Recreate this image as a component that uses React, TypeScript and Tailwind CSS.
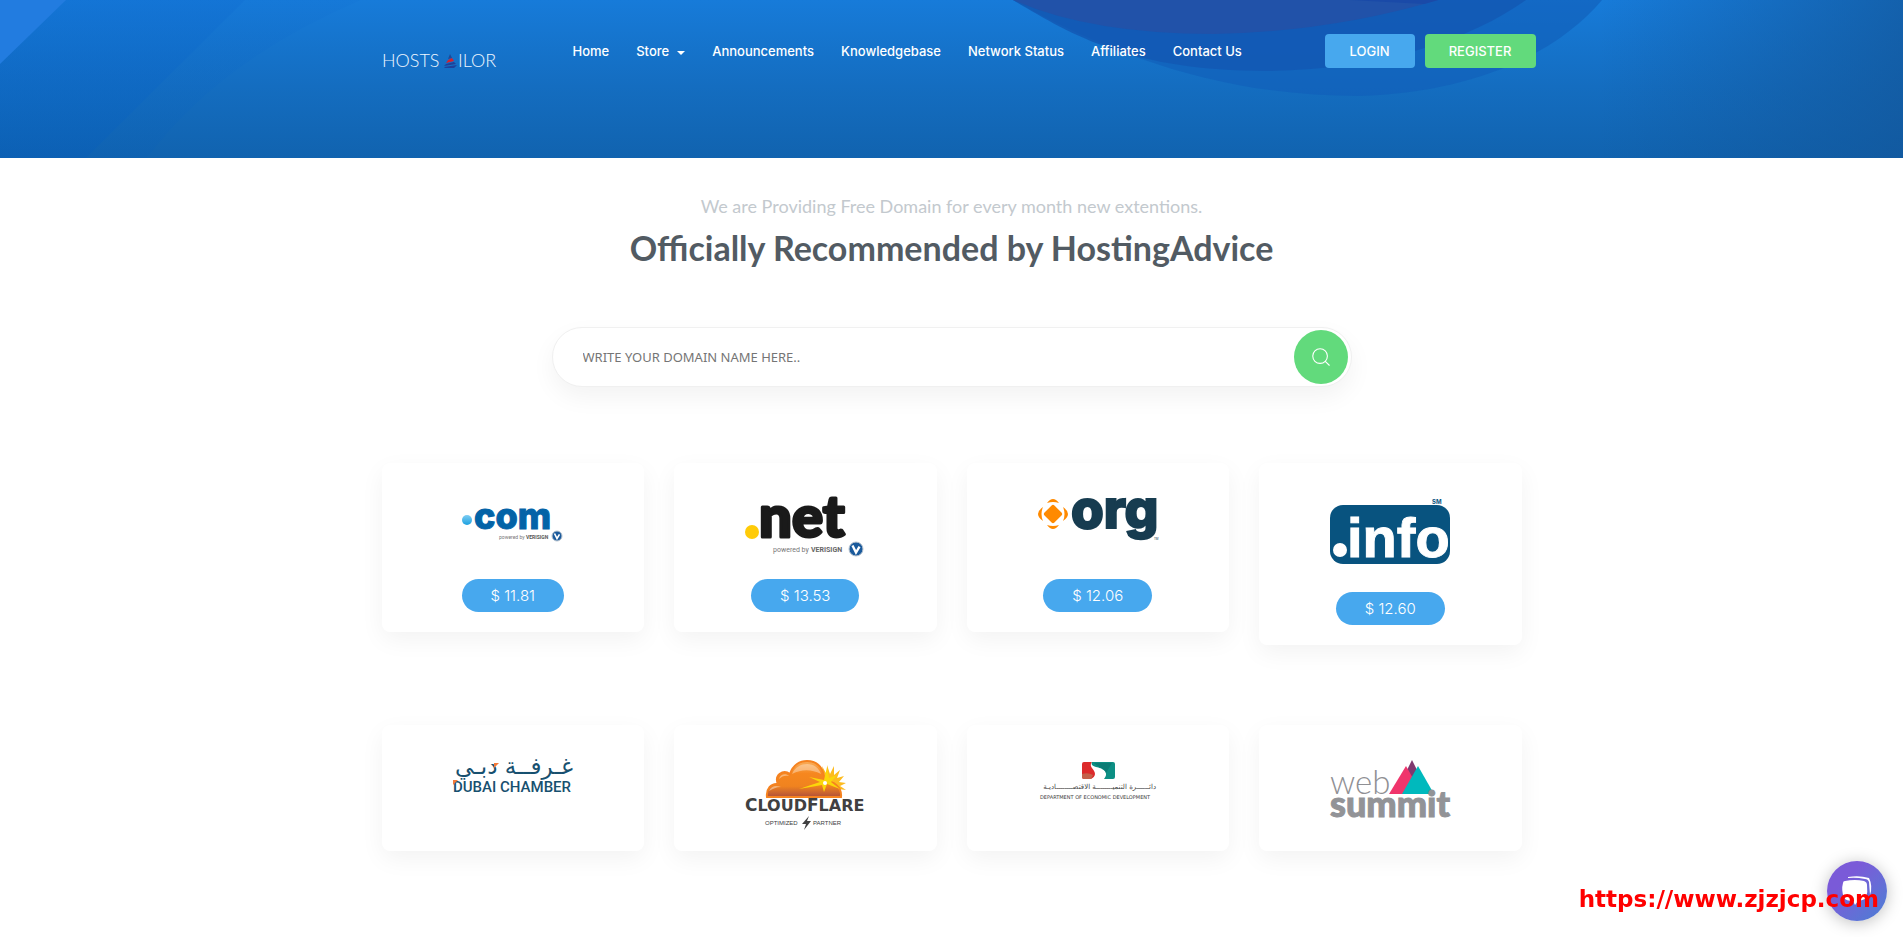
import type {ReactNode} from "react";
import {Search} from "lucide-react";

const navLinks = [
    {title: "Home", url: "#home"},
    {title: "Store", url: "#store", dropdown: true},
    {title: "Announcements", url: "#announcements"},
    {title: "Knowledgebase", url: "#knowledgebase"},
    {title: "Network Status", url: "#status"},
    {title: "Affiliates", url: "#affiliates"},
    {title: "Contact Us", url: "#contact"},
];

/*
|--------------------------------------------------------------------------
| $logos
|--------------------------------------------------------------------------
*/
function SiteLogo() {
    return (
        <svg width="117" height="14" viewBox="0 0 117 14" className="overflow-visible" role="img" aria-label="HostSailor">
            <g className="font-['Lato'] font-light" fontSize="18" fill="#eef6ff">
                <text x="-1" y="13">HOSTS</text>
                <text x="75" y="13">ILOR</text>
            </g>
            <path d="M67 0 69 4 65 5Z" fill="#1b4a9c"/>
            <path d="M69 4 71 7 63 9 65 6Z" fill="#d3232f"/>
            <path d="M71 8 73 10 61 12 63 10ZM61 13 74 11 71 14 62 14Z" fill="#20419a"/>
        </svg>
    );
}

function VerisignBadge({cx, cy, r}: { cx: number; cy: number; r: number }) {
    return (
        <g>
            <circle cx={cx} cy={cy} r={r} fill="#1a5a9c" stroke="#b9c4cf" strokeWidth="1"/>
            <path
                d={`M${cx - r / 2} ${cy - r / 2}L${cx} ${cy + r / 2}L${cx + r / 2} ${cy - r / 3}`}
                fill="none" stroke="#fff" strokeWidth={r / 3}
            />
        </g>
    );
}

function ComLogo() {
    return (
        <svg width="120" height="61" viewBox="0 0 120 61" className="overflow-visible" role="img" aria-label=".com">
            <defs>
                <linearGradient id="com-dot" x1="0" y1="0" x2="0" y2="1">
                    <stop offset="0" stopColor="#7fcdf3"/>
                    <stop offset="1" stopColor="#1ba0e0"/>
                </linearGradient>
            </defs>
            <circle cx="14" cy="22" r="5" fill="url(#com-dot)"/>
            <text
                x="21" y="31" className="font-['Inter'] font-extrabold" fontSize="36"
                fill="#0363a7" stroke="#0363a7" strokeWidth="1"
            >
                com
            </text>
            <text x="46" y="41" className="font-['Roboto']" fontSize="5" fill="#777">powered by</text>
            <text x="73" y="41" className="font-['Roboto'] font-bold" fontSize="5" fill="#555">VERISIGN</text>
            <VerisignBadge cx={104} cy={38} r={5}/>
        </svg>
    );
}

function NetLogo() {
    return (
        <svg width="120" height="61" viewBox="0 0 120 61" className="overflow-visible" role="img" aria-label=".net">
            <circle cx="7" cy="34" r="7" fill="#ffcb08"/>
            <text
                x="14" y="39" className="font-['Lato'] font-black" fontSize="58"
                fill="#1a1a1a" stroke="#1a1a1a" strokeWidth="3" strokeLinejoin="round"
            >
                net
            </text>
            <text x="28" y="54" className="font-['Roboto']" fontSize="7" fill="#777">powered by</text>
            <text x="66" y="54" className="font-['Roboto'] font-bold" fontSize="7" fill="#666">VERISIGN</text>
            <VerisignBadge cx={111} cy={51} r={7}/>
        </svg>
    );
}

function OrgLogo() {
    return (
        <svg width="120" height="61" viewBox="0 0 120 61" className="overflow-visible" role="img" aria-label=".org">
            <g fill="#ff8a00">
                <rect x="8" y="9" width="14" height="14" rx="2" transform="rotate(45 15 16)"/>
                <path d="M9 5Q15-3 21 5Q15 3 9 5ZM9 27Q15 35 21 27Q15 29 9 27Z"/>
                <path d="M5 9Q-5 16 5 23Q2 16 5 9ZM25 9Q35 16 25 23Q28 16 25 9Z"/>
            </g>
            <text
                x="33" y="30" className="font-['Inter'] font-extrabold" fontSize="53"
                fill="#173c50" stroke="#173c50" strokeWidth="2"
            >
                org
            </text>
            <text x="116" y="42" className="font-['Roboto']" fontSize="3" fill="#173c50">TM</text>
        </svg>
    );
}

function InfoLogo() {
    return (
        <svg width="120" height="74" viewBox="0 0 120 74" className="overflow-visible" role="img" aria-label=".info">
            <text x="102" y="6" className="font-['Inter'] font-bold" fontSize="6" fill="#08537f">SM</text>
            <rect y="7" width="120" height="59" rx="13" fill="#08537f"/>
            <circle cx="10" cy="52" r="7" fill="#fff"/>
            <text
                x="17" y="59" className="font-['Liberation_Sans'] font-bold" fontSize="56"
                fill="#fff" stroke="#fff" strokeWidth="1"
            >
                info
            </text>
        </svg>
    );
}

function DubaiChamberLogo() {
    return (
        <svg width="120" height="57" viewBox="0 0 120 57" className="overflow-visible" role="img" aria-label="Dubai Chamber">
            <text x="120" y="14" direction="rtl" className="font-['DejaVu_Sans']" fontSize="23" fill="#17506f">
                غـرفــة دبـي
            </text>
            <path d="M41 3h5l-5 5Z" fill="#f47b3a"/>
            <text x="0" y="32" className="font-['Roboto'] font-medium" fontSize="15" fill="#17506f">
                DUBAI CHAMBER
            </text>
            <path d="M0 20h5l-5 5Z" fill="#f47b3a"/>
        </svg>
    );
}

function CloudflareLogo() {
    return (
        <svg width="120" height="72" viewBox="0 0 120 72" className="overflow-visible" role="img" aria-label="Cloudflare Optimized Partner">
            <defs>
                <linearGradient id="cloud" x1="0" y1="0" x2="0" y2="1">
                    <stop offset="0" stopColor="#f9ae5c"/>
                    <stop offset=".35" stopColor="#f6871f"/>
                    <stop offset=".7" stopColor="#f0831f"/>
                    <stop offset="1" stopColor="#b1503a"/>
                </linearGradient>
            </defs>
            <path
                d="M80 22 77 6l5 9 0-10 3 9 4-8 0 9 6-5-3 8 7-2-5 6 7 1-6 3 6 4-8-1 4 7-9-5Z"
                fill="#fdbb1f"
            />
            <path
                d="M22 37C21 29 26 23 33 24C29 15 38 9 45 14C48 5 55 1 62 1C73 1 80 9 79 22C88 20 97 27 96 37Z"
                fill="url(#cloud)" stroke="#f58220" strokeWidth="2"
            />
            <path d="M47 14C50 7 56 4 62 4C69 4 74 8 76 14C66 9 57 9 47 14Z" fill="#fff" opacity=".35"/>
            <path
                d="M24 31C26 26 31 25 36 27C31 27 28 29 24 31ZM34 19C35 14 41 13 44 16C40 15 37 16 34 19Z"
                fill="#fff" opacity=".4"
            />
            <path d="M54 29 75 22 64 17 79 20 82 7 84 18 92 15 86 22 95 29 82 24 79 32 77 25Z" fill="#fbd60a"/>
            <circle cx="80" cy="23" r="2" fill="#fff"/>
            <text
                x="0" y="51" className="font-['DejaVu_Sans'] font-bold" fontSize="17"
                fill="#404041"
            >
                C<tspan fontSize="16">LOUD</tspan>F<tspan fontSize="16">LARE</tspan>
            </text>
            <g className="font-['Liberation_Sans']" fontSize="6" fill="#404041">
                <text x="20" y="65">OPTIMIZED</text>
                <text x="68" y="65">PARTNER</text>
            </g>
            <path d="M64 56 57 64h4l-2 6 7-9h-4Z" fill="#404041"/>
        </svg>
    );
}

function EconomicLogo() {
    return (
        <svg width="120" height="57" viewBox="0 0 120 57" className="overflow-visible" role="img" aria-label="Department of Economic Development">
            <path d="M46 2h8c-4 5 3 7 3 12 0 2-2 4-4 5h-7a2 2 0 0 1-2-2V4a2 2 0 0 1 2-2Z" fill="#dc2a2b"/>
            <path d="M44 14q6-2 11 1l-2 4h-7a2 2 0 0 1-2-2Z" fill="#c4614a"/>
            <path d="M54 2h21a2 2 0 0 1 2 2v13a2 2 0 0 1-2 2h-9c6-7-2-11-8-12-4-1-5-3-4-5Z" fill="#0d8f84"/>
            <path d="M56 3h18L68 13C67 8 59 7 56 3Z" fill="#0a6f6a" opacity=".6"/>
            <text x="118" y="29" direction="rtl" className="font-['DejaVu_Sans']" fontSize="7" fill="#444">
                دائــــــرة التنميــــــــة الاقتصــــــــاديـة
            </text>
            <text x="2" y="39" className="font-['DejaVu_Sans']" fontSize="5" fill="#3a3a3a">
                DEPARTMENT OF ECONOMIC DEVELOPMENT
            </text>
        </svg>
    );
}

function WebSummitLogo() {
    return (
        <svg width="120" height="60" viewBox="0 0 120 60" className="overflow-visible" role="img" aria-label="Web Summit">
            <text x="0" y="34" className="font-['Lato'] font-light" fontSize="33" fill="#8f9094">web</text>
            <path d="M82 0 72 20 82 34 91 18Z" fill="#80396f"/>
            <path d="M76 6 59 34H92Z" fill="#f0356c"/>
            <path d="M88 6 72 34H104Z" fill="#00b9bd"/>
            <text
                x="0" y="57" className="font-['Lato'] font-black" fontSize="36"
                fill="#929397" stroke="#929397" strokeWidth="1"
            >
                summit
            </text>
        </svg>
    );
}

/*
|--------------------------------------------------------------------------
| $data
|--------------------------------------------------------------------------
*/
const domains: { name: string; price: string; logo: ReactNode }[] = [
    {name: "com", price: "$ 11.81", logo: <ComLogo/>},
    {name: "net", price: "$ 13.53", logo: <NetLogo/>},
    {name: "org", price: "$ 12.06", logo: <OrgLogo/>},
    {name: "info", price: "$ 12.60", logo: <InfoLogo/>},
];

const partners: { name: string; logo: ReactNode }[] = [
    {name: "dubai-chamber", logo: <DubaiChamberLogo/>},
    {name: "cloudflare", logo: <CloudflareLogo/>},
    {name: "economic-development", logo: <EconomicLogo/>},
    {name: "web-summit", logo: <WebSummitLogo/>},
];

function HeaderBackdrop() {
    return (
        <svg
            className="absolute inset-0 w-full h-full"
            viewBox="0 0 1903 158" preserveAspectRatio="none" aria-hidden="true"
        >
            <defs>
                <linearGradient id="sky" x1="0" y1="0" x2="0" y2="1">
                    <stop offset="0" stopColor="#177bd9"/>
                    <stop offset=".55" stopColor="#146dc0"/>
                    <stop offset="1" stopColor="#1163af"/>
                </linearGradient>
                <linearGradient id="edge" x1="0" y1="0" x2="1" y2="0">
                    <stop offset="0" stopColor="#12569a" stopOpacity="0"/>
                    <stop offset="1" stopColor="#12569a" stopOpacity=".7"/>
                </linearGradient>
                <linearGradient id="facet" x1="0" y1="0" x2="0" y2="1">
                    <stop offset="0" stopColor="#1272d4"/>
                    <stop offset="1" stopColor="#0a5fb6"/>
                </linearGradient>
            </defs>
            <rect width="1903" height="158" fill="url(#sky)"/>
            <path d="M0 0H361Q220 60 147 158H0Z" fill="url(#facet)" opacity=".25"/>
            <path d="M0 0H245L86 158H0Z" fill="url(#facet)" opacity=".6"/>
            <path d="M0 0H66L0 64Z" fill="#227ce0"/>
            <rect x="1600" width="303" height="158" fill="url(#edge)"/>
            <path d="M1013 0C1120 60 1230 96 1359 96C1480 92 1560 50 1602 0Z" fill="#115fba" opacity=".65"/>
            <path d="M1013 0C1070 34 1130 71 1267 71C1380 70 1470 40 1526 0Z" fill="#1357b3" opacity=".8"/>
            <path d="M1013 0Q1090 34 1213 34Q1330 32 1438 0Z" fill="#2152a9"/>
            <path d="M1350 0H1438L1424 4Z" fill="#1a4aa8"/>
        </svg>
    );
}

function Header() {
    return (
        <header className="relative h-[158px] text-white">
            <HeaderBackdrop/>
            <div className="relative max-w-[1170px] mx-auto flex items-start pt-[34px] pr-px font-['Inter',sans-serif]">
                <a href="#home" className="ml-4 mt-5 shrink-0"><SiteLogo/></a>

                <nav className="ml-[73px] h-[34px] flex items-center">
                    <ul className="flex items-center gap-[27px] text-[13px] leading-5 font-medium whitespace-nowrap">
                        {navLinks.map((link) => (
                            <li key={link.title}>
                                <a href={link.url} className="flex items-center gap-2">
                                    {link.title}
                                    {link.dropdown && (
                                        <span
                                            className="mt-1 border-x-4 border-t-4 border-x-transparent border-t-white"/>
                                    )}
                                </a>
                            </li>
                        ))}
                    </ul>
                </nav>

                <div className="ml-auto flex gap-[10px] text-[13px] leading-5 font-medium">
                    <button type="button" className="w-[90px] h-[34px] rounded bg-[#47a8ee]">LOGIN</button>
                    <button type="button" className="w-[111px] h-[34px] rounded bg-[#62da7c]">REGISTER</button>
                </div>
            </div>
        </header>
    );
}

export default function App() {
    return (
        <div className="bg-white">
            <Header/>

            <main className="pt-[34px] pb-10">
                <div className="text-center font-['Lato',sans-serif]">
                    <p className="text-[18px] leading-7 text-[#c3c9ce]">
                        We are Providing Free Domain for every month new extentions.
                    </p>
                    <h1 className="mt-2 text-[34px] leading-10 font-bold text-[#525b63]">
                        Officially Recommended by HostingAdvice
                    </h1>
                </div>

                {/* DOMAIN SEARCH */}
                <form
                    className="max-w-[800px] h-[60px] mx-auto mt-[59px] pl-[30px] pr-[3px] flex items-center rounded-full border border-[#f0f0f0] bg-white shadow-[0_10px_25px_rgba(0,0,0,0.05)]"
                    onSubmit={(e) => e.preventDefault()}
                >
                    <input
                        type="text"
                        aria-label="Domain name"
                        placeholder="WRITE YOUR DOMAIN NAME HERE.."
                        className="flex-1 min-w-0 pt-px text-[13px] outline-none placeholder:text-[#757575] font-['Noto_Sans',sans-serif]"
                    />
                    <button
                        type="submit"
                        aria-label="Search"
                        className="size-[54px] shrink-0 rounded-full bg-[#62da7c] text-white flex items-center justify-center"
                    >
                        <Search size={22} strokeWidth={1.2}/>
                    </button>
                </form>

                {/* PRICES */}
                <div className="max-w-[1140px] mx-auto mt-[76px] grid grid-cols-4 items-start gap-[30px]">
                    {domains.map((domain) => (
                        <div
                            key={domain.name}
                            className="flex flex-col items-center gap-5 pt-[35px] pb-5 rounded-lg bg-white shadow-[0_8px_25px_rgba(0,0,0,0.05)]"
                        >
                            {domain.logo}
                            <span
                                className="h-[33px] px-[29px] flex items-center rounded-full bg-[#47a8ee] text-white text-[15px] leading-6 font-light font-['Inter',sans-serif]">
                                {domain.price}
                            </span>
                        </div>
                    ))}
                </div>

                {/* PARTNERS */}
                <div className="max-w-[1140px] mx-auto mt-20 grid grid-cols-4 gap-[30px]">
                    {partners.map((partner) => (
                        <div
                            key={partner.name}
                            className="h-[126px] flex items-start justify-center pt-[35px] rounded-lg bg-white shadow-[0_8px_25px_rgba(0,0,0,0.05)]"
                        >
                            {partner.logo}
                        </div>
                    ))}
                </div>
            </main>

            {/* CHAT */}
            <button
                type="button"
                aria-label="Open chat"
                className="fixed right-4 bottom-4 size-[60px] rounded-full flex items-center justify-center bg-linear-135 from-[#7a5ad8] from-30% to-[#447fd4] shadow-[0_2px_16px_rgba(0,0,0,0.25)]"
            >
                <svg width="32" height="32" viewBox="0 0 32 32" fill="#fff" aria-hidden="true">
                    <path d="M7 2Q18 0 28 3Q32 11 29 20L28 7Q27 4 24 4Q15 2 7 3Z"/>
                    <path d="M4 6Q14 4 23 6Q26 7 26 10Q27 17 25 23Q23 25 17 26L14 30L12 26Q5 26 3 23Q0 15 2 8Q2 6 4 6Z"/>
                </svg>
            </button>

            <a
                href="https://www.zjzjcp.com"
                className="fixed right-6 bottom-6 text-[23px] leading-7 font-bold text-[#ff0000] font-['DejaVu_Sans',sans-serif]"
            >
                https://www.zjzjcp.com
            </a>
        </div>
    );
}
